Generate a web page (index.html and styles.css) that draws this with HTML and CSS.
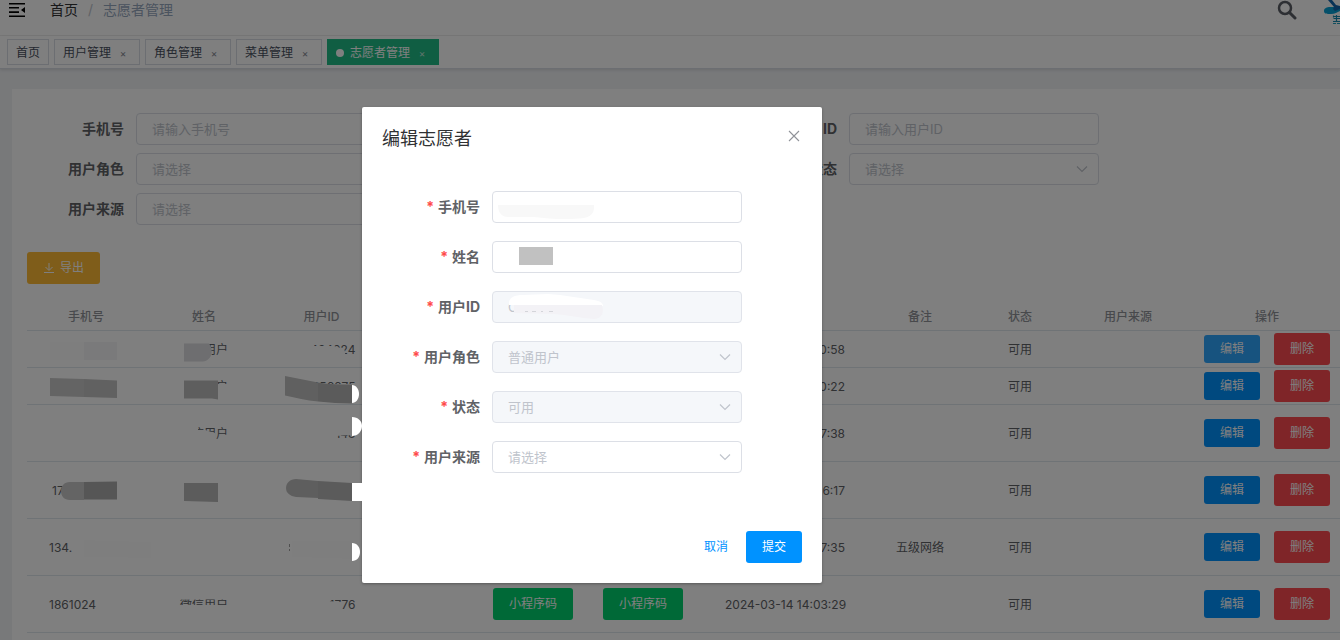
FILE: index.html
```html
<!DOCTYPE html>
<html lang="zh-CN">
<head>
<meta charset="utf-8">
<title>志愿者管理</title>
<link rel="stylesheet" href="styles.css">
</head>
<body>
<svg class="defs" width="0" height="0" aria-hidden="true">
  <symbol id="chevron" viewBox="0 0 12 12"><path d="M1 3.500l5 5 5-5" fill="none" stroke="currentColor" stroke-width="1.200"/></symbol>
</svg>
<div class="page">
  <header class="navbar">
    <button class="icon-btn" type="button" aria-label="收起菜单">
      <svg width="16" height="14" viewBox="0 0 16 14"><path d="M0 0h16v1.500H0zM0 4h10v1.600H0zM0 8.300h10v1.600H0zM0 12.500h16V14H0zM16 4v6l-4-3z" fill="#000"/></svg>
    </button>
    <nav class="breadcrumb"><a href="#">首页</a><span class="sep">/</span><span class="current">志愿者管理</span></nav>
    <div class="nav-right">
      <button class="icon-btn" type="button" aria-label="搜索">
        <svg width="20" height="20" viewBox="0 0 20 20" fill="none" stroke="#5a5e66"><circle cx="8" cy="8" r="6" stroke-width="2.500"/><path d="M12.500 12.500L18 18" stroke-width="3" stroke-linecap="round"/></svg>
      </button>
      <svg class="logo" width="16" height="28" viewBox="0 0 16 28"><path d="M0 15c0-3 3-4 6-4h10v4c-3 1-5 3-9 3-4 0-7 0-7-3z" fill="#08a0d4"/><path d="M4 4h4l4 5 4 1v3l-5 2-2-2 1-2z" fill="#1265ad"/><path d="M9 20.500h7M12.500 19v7M9.500 22.500H16M9 25.500h7M9.500 19.500v2" stroke="#168bb0" stroke-width="1.200" fill="none"/><path d="M9 27h3v1H9zM13 27h3v1h-3z" fill="#20a0c0"/></svg>
    </div>
  </header>
  <nav class="tags">
    <a class="tag" href="#">首页</a>
    <a class="tag closable" href="#">用户管理<span class="x">×</span></a>
    <a class="tag closable" href="#">角色管理<span class="x">×</span></a>
    <a class="tag closable" href="#">菜单管理<span class="x">×</span></a>
    <a class="tag closable active" href="#"><i class="dot"></i>志愿者管理<span class="x">×</span></a>
  </nav>
  <main class="card">
    <form class="search">
      <div class="field"><label for="s-phone">手机号</label><input id="s-phone" type="text" placeholder="请输入手机号"></div>
      <div class="field"></div>
      <div class="field"><label for="s-id">用户ID</label><input id="s-id" type="text" placeholder="请输入用户ID"></div>
      <div class="field"><label for="s-role">用户角色</label><div class="select"><select id="s-role"><option>请选择</option></select><svg class="chevron"><use href="#chevron"/></svg></div></div>
      <div class="field"></div>
      <div class="field"><label for="s-state">状态</label><div class="select"><select id="s-state"><option>请选择</option></select><svg class="chevron"><use href="#chevron"/></svg></div></div>
      <div class="field"><label for="s-source">用户来源</label><div class="select"><select id="s-source"><option>请选择</option></select><svg class="chevron"><use href="#chevron"/></svg></div></div>
    </form>
    <button class="btn export" type="button"><svg width="12" height="12" viewBox="0 0 12 12" fill="none" stroke="#fff"><path d="M6 1v7M2.500 5L6 8.500 9.500 5M1 10.500h10"/></svg>导出</button>
    <table class="grid">
      <colgroup><col class="w-phone"><col class="w-name"><col class="w-id"><col class="w-note"><col class="w-code"><col class="w-code"><col class="w-time"><col class="w-remark"><col class="w-state"><col class="w-source"><col></colgroup>
      <thead><tr><th>手机号</th><th>姓名</th><th>用户ID</th><th></th><th></th><th></th><th></th><th>备注</th><th>状态</th><th>用户来源</th><th class="ops-head">操作</th></tr></thead>
      <tbody>
        <tr class="short"><td></td><td>微信用户</td><td><span class="id">434024</span></td><td></td><td></td><td></td><td><span class="time">0:58</span></td><td></td><td>可用</td><td></td><td class="ops"><div><button class="btn edit focus" type="button">编辑</button><button class="btn delete" type="button">删除</button></div></td></tr>
        <tr class="short"><td></td><td><span class="name">户</span></td><td><span class="id">456675</span></td><td></td><td></td><td></td><td><span class="time">0:22</span></td><td></td><td>可用</td><td></td><td class="ops"><div><button class="btn edit" type="button">编辑</button><button class="btn delete" type="button">删除</button></div></td></tr>
        <tr><td></td><td>微信用户</td><td><span class="id">148</span></td><td></td><td></td><td></td><td><span class="time">7:38</span></td><td></td><td>可用</td><td></td><td class="ops"><div><button class="btn edit" type="button">编辑</button><button class="btn delete" type="button">删除</button></div></td></tr>
        <tr><td><span class="phone inset">17</span></td><td></td><td></td><td></td><td></td><td></td><td><span class="time">6:17</span></td><td></td><td>可用</td><td></td><td class="ops"><div><button class="btn edit" type="button">编辑</button><button class="btn delete" type="button">删除</button></div></td></tr>
        <tr><td><span class="phone">134.</span></td><td></td><td></td><td></td><td></td><td></td><td><span class="time">7:35</span></td><td>五级网络</td><td>可用</td><td></td><td class="ops"><div><button class="btn edit" type="button">编辑</button><button class="btn delete" type="button">删除</button></div></td></tr>
        <tr><td><span class="phone">1861024</span></td><td>微信用户</td><td><span class="id">1776</span></td><td></td><td class="action"><button class="btn code" type="button">小程序码</button></td><td class="action"><button class="btn code" type="button">小程序码</button></td><td><span class="time">2024-03-14 14:03:29</span></td><td></td><td>可用</td><td></td><td class="ops"><div><button class="btn edit" type="button">编辑</button><button class="btn delete" type="button">删除</button></div></td></tr>
      </tbody>
    </table>
  </main>
  <!-- brush marks hiding personal data in the table -->
  <svg class="marks" width="362" height="640" viewBox="0 0 362 640" aria-hidden="true">
    <g fill="#fff">
      <path d="M178 342h28v18h-28z"/><path d="M284 346h50l10 3c2 4 1 8 0 9h-60z"/><path d="M284 342h30v6h-30z"/>
      <path d="M180 384h50v14h-50z"/><path d="M310 384h45v12h-45z"/>
      <path d="M178 424h20v6l7 0 10 3 2 12h-39z"/><path d="M334 424h20v11l-20 1z"/>
      <path d="M178 594h52v5.500h-52z"/><path d="M178 605h52v8h-52z"/><path d="M326 601l16 1v10h-16z"/>
    </g>
    <path d="M50 342h34v18H50z" fill="#fdfdfd"/><path d="M84 342h33v18H84z" fill="#f5f5f6"/>
    <path d="M184 343.500h25c3 3 4 12 0 15-3 3-5 3-8 3h-17z" fill="#dcdce0"/>
    <path d="M50 378l34 1v18l-34-1z" fill="#c9c9c9"/><path d="M84 379l33 1.500V398l-33-1z" fill="#c3c3c3"/>
    <path d="M184 380.500h34v19l-6-1h-28z" fill="#bdbdbd"/>
    <path d="M285 376l33 6.500v19c-12-1-22-4-33-6z" fill="#c0c0c0"/><path d="M318 382.500c12 2 22 2 34 2v19c-12 0-22-1-34-2z" fill="#b6b6b6"/>
    <path d="M84 482H70c-6 0-9 4-9 9s3 9 9 9h14z" fill="#c8c8c8"/><path d="M84 482l33-.5v18H84z" fill="#acacac"/>
    <path d="M184 483h34v19l-34-1z" fill="#b8b8b8"/>
    <path d="M318 481l-22-2c-6 0-10 4-10 9s4 8 10 9l22 1z" fill="#bdbdbd"/><path d="M318 481l34 2v18l-34-2z" fill="#b6b6b6"/>
    <path d="M84 540l67 2v16l-67-1z" fill="#fdfdfd"/><path d="M292 541h60v18l-60-2z" fill="#fdfdfd"/>
    <path d="M289.500 544v3M289.500 549v2" stroke="#a0a0a0"/>
  </svg>
</div>

<div class="overlay">
  <section class="dialog" role="dialog" aria-labelledby="dlg-title">
    <header><h2 id="dlg-title">编辑志愿者</h2>
      <button class="icon-btn" type="button" aria-label="关闭"><svg width="16" height="16" viewBox="0 0 16 16"><path d="M3 3l10 10M13 3L3 13" stroke="#909399" stroke-width="1.100"/></svg></button>
    </header>
    <form id="edit" class="edit-form">
      <div class="field"><label for="e-phone">手机号</label><input id="e-phone" type="text"></div>
      <div class="field"><label for="e-name">姓名</label><input id="e-name" type="text"></div>
      <div class="field"><label for="e-id">用户ID</label><input id="e-id" type="text" value="C" disabled></div>
      <div class="field"><label for="e-role">用户角色</label><div class="select"><select id="e-role" disabled><option>普通用户</option></select><svg class="chevron"><use href="#chevron"/></svg></div></div>
      <div class="field"><label for="e-state">状态</label><div class="select"><select id="e-state" disabled><option>可用</option></select><svg class="chevron"><use href="#chevron"/></svg></div></div>
      <div class="field"><label for="e-source">用户来源</label><div class="select"><select id="e-source"><option>请选择</option></select><svg class="chevron"><use href="#chevron"/></svg></div></div>
    </form>
    <footer><button class="btn text" type="button">取消</button><button class="btn primary" type="submit" form="edit">提交</button></footer>
    <!-- brush marks hiding personal data in the form -->
    <svg class="marks" width="460" height="240" viewBox="362 107 460 240" aria-hidden="true">
      <path d="M498 205h96c1 8-4 12-10 13-15 2-35 1-50-1h-26c-6 0-10-4-10-12z" fill="#f8f8f8"/>
      <path d="M519 247h34v18h-34z" fill="#c1c1c1"/>
      <path d="M509 305c-1-8 6-10 14-10l25-1 12 1 34 5c6 1 9 3 9 6z" fill="#fff"/>
      <path d="M514 305h88c3 9-2 14-8 14-14-1-26-4-40-5l-40-1z" fill="#f3f2f6"/>
      <path d="M525 311.500h3M532 311.500h4M541 311.500h2M549 311.500h4" stroke="#d4d5da"/>
    </svg>
  </section>
</div>
<svg class="marks top" width="362" height="640" viewBox="0 0 362 640" fill="#fff" aria-hidden="true">
  <path d="M352 385c4 0 7 4 7 9s-3 9-7 9z"/><path d="M352 417c6 0 10 4 10 9s-4 10-10 10z"/><path d="M352 483h10v18h-10z"/><path d="M352 543c5 0 8 4 8 9s-3 9-8 9z"/>
</svg>
</body>
</html>
```

FILE: styles.css
```css
* { box-sizing: border-box; }
body {
  margin: 0;
  height: 100vh;
  overflow: hidden;
  position: relative;
  background: #f0f2f5;
  color: #606266;
  font: 12px/20px Inter, "Noto Sans CJK SC", sans-serif;
}
button, input, select { font: inherit; }
button { cursor: pointer; }
a { color: inherit; text-decoration: none; }
.defs { position: absolute; }
.page { display: flex; flex-direction: column; height: 100vh; overflow: hidden; }
.icon-btn { display: flex; padding: 0; border: 0; background: none; }

.navbar {
  display: flex;
  flex: none;
  align-items: center;
  height: 36px;
  padding: 0 0 16px 9px;
  background: #fff;
  border-bottom: 1px solid #f0f0f0;
}
.breadcrumb { display: flex; margin-left: 25px; font-size: 14px; color: #303133; }
.sep { margin: 0 10px; color: #c0c4cc; }
.current { color: #97a8be; }
.nav-right { display: flex; align-items: center; gap: 27px; margin-left: auto; height: 20px; }

.tags {
  display: flex;
  flex: none;
  gap: 5px;
  padding: 3px 7px;
  background: #fff;
  border-bottom: 1px solid #d8dce5;
  box-shadow: 0 1px 3px rgba(0, 0, 0, .12);
}
.tag {
  display: flex;
  align-items: center;
  height: 26px;
  padding: 2px 8px 0;
  border: 1px solid #d8dce5;
  color: #495060;
}
.tag.closable { padding-right: 12px; }
.x { width: 8px; margin-left: 8px; font-size: 10px; text-align: center; color: #81858f; }
.tag.active { background: #20bd87; border-color: #20bd87; color: #fff; }
.active .x { color: #c0e8da; }
.dot { width: 8px; height: 8px; margin-right: 6px; border-radius: 50%; background: #fff; }

.card { flex: 1; margin: 20px 0 0 12px; padding: 24px 0 0 15px; background: #fff; }
.search {
  display: grid;
  grid-template-columns: 346px 347px 346px;
  gap: 8px 10px;
  margin: 0 0 27px 13px;
}
.field { display: flex; align-items: center; }
.field label { flex: none; width: 96px; padding-right: 12px; text-align: right; font-size: 14px; font-weight: 700; white-space: nowrap; }
.select { position: relative; flex: 1; }
.field input, .field select {
  display: block;
  flex: 1;
  width: 100%;
  min-width: 0;
  height: 32px;
  margin: 0;
  padding: 0 15px;
  border: 1px solid #dcdfe6;
  border-radius: 4px;
  background: #fff;
  color: #c0c4cc;
  font-size: 13px;
  appearance: none;
  opacity: 1;
}
.field input::placeholder { color: #c0c4cc; }
.field input:disabled, .field select:disabled { background: #f5f7fa; border-color: #e0e3ea; }
.chevron { position: absolute; right: 11px; top: 10px; width: 12px; height: 12px; color: #c0c4cc; pointer-events: none; }

.btn {
  height: 32px;
  padding: 0 15px;
  border: 1px solid transparent;
  border-radius: 3px;
  color: #fff;
  line-height: 30px;
  white-space: nowrap;
}
.export { display: flex; align-items: center; gap: 5px; background: #ffba34; }
.edit { height: 28px; line-height: 26px; background: #0092ff; }
.edit.focus { background: #2ea6ff; }
.delete { background: #ff4a50; }
.code { background: #00d26e; }
.primary { background: #0092ff; }
.text { background: none; color: #0092ff; }

.grid { width: 100%; margin-top: 18px; table-layout: fixed; border-collapse: separate; border-spacing: 0; }
.grid th, .grid td { height: 57px; padding: 2px 0 0; border-bottom: 1px solid #dfe6ec; text-align: center; white-space: nowrap; }
.grid th { height: 29px; color: #909399; font-weight: 500; }
.grid .short td { height: 37px; }
.grid .action { padding: 0; }
.grid .ops { padding: 0 0 0 10px; }
.grid .ops-head { padding-left: 10px; }
.ops div { display: flex; align-items: center; justify-content: center; gap: 14px; }
.w-phone, .w-name { width: 118px; }
.w-id { width: 117px; }
.w-note { width: 98px; }
.w-code { width: 110px; }
.w-time { width: 174px; }
.w-remark { width: 96px; }
.w-state { width: 104px; }
.w-source { width: 112px; }
.phone, .name, .id, .time { display: inline-block; }
.phone { width: 74px; text-align: left; }
.inset { padding-left: 3px; }
.name { width: 48px; text-align: right; }
.id { width: 68px; text-align: right; }
.time { width: 120px; text-align: right; }

.marks { position: absolute; left: 0; top: 0; pointer-events: none; }
.marks.top { z-index: 3; }

.overlay {
  position: absolute;
  inset: 0;
  z-index: 2;
  display: grid;
  grid-template-columns: 362fr 460px 518fr;
  align-content: start;
  padding-top: 107px;
  background: rgba(0, 0, 0, .5);
}
.dialog { position: relative; grid-column: 2; background: #fff; border-radius: 2px; box-shadow: 0 1px 3px rgba(0, 0, 0, .3); }
.dialog header { display: flex; justify-content: space-between; padding: 20px 20px 10px; }
.dialog h2 { margin: 0; color: #303133; font-size: 18px; line-height: 24px; font-weight: 400; }
.dialog header .icon-btn { height: 16px; margin-top: 1px; }
.edit-form { display: grid; gap: 18px; padding: 30px 80px 48px 34px; }
.edit-form .field label::before { content: "*"; margin-right: 4px; color: #ff4949; }
.dialog footer { display: flex; justify-content: flex-end; gap: 2px; padding: 10px 20px 20px; }
```
